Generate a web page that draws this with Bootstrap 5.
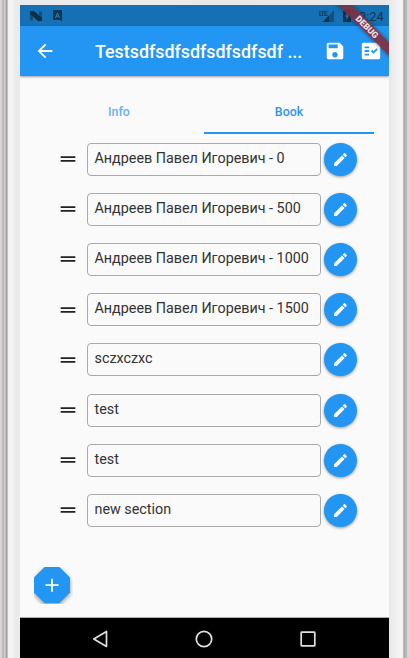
<!DOCTYPE html>
<html lang="en">
<head>
<meta charset="utf-8">
<meta name="viewport" content="width=device-width, initial-scale=1">
<title>Book</title>
<link href="https://cdn.jsdelivr.net/npm/bootstrap@5.3.0/dist/css/bootstrap.min.css" rel="stylesheet">
<style>
html, body { height: 100%; }
body { font-family: Roboto, "Liberation Sans", sans-serif; overflow: hidden; color: #2b2b2b; }
.phone { width: 410px; height: 658px; padding: 5px 21px 0 20px;
  background: linear-gradient(90deg, #dedadb 0, #d3cecf 2px, #a9a4a5 3px, #d0cbcc 4px, #cdc8c9 5px, #b9b4b5 6px, #8f8a8c 7px, #f0f0f1 8px, #f5f5f6 10px, #f3f3f4 13px, #ebebed 15px, #ebebed 20px, #e8e8ea 390px, #f0f0f1 395px, #f5f5f6 401px, #f0f0f1 403px, #8f8a8c 404px, #cfcacb 405px, #a7a2a3 406px, #d6d1d2 407px, #dedadb 410px); }
.screen { width: 369px; height: 653px; background: #fafafa; }
.status-bar { height: 21px; background: #1570b5; color: #113650; padding: 0 7px 0 9px; }
.clock { font-size: 12.9px; line-height: 21px; width: 27px; padding-top: 1px; text-align: right; }
.app-bar { height: 50px; background: #2396f3; padding: 0 7px 0 14px; box-shadow: 0 1px 2px rgba(60,60,100,.5); z-index: 1; }
.app-title { font-size: 17.85px; font-weight: 500; line-height: 24px; margin-left: 39px; width: 215px; padding-top: 1px; }
.ribbon-box { width: 60px; height: 60px; z-index: 2; }
.ribbon { left: -7px; top: 17px; width: 90px; height: 10px; background: rgba(126,47,67,.9); transform: rotate(45deg);
  box-shadow: 0 0 4px rgba(0,0,0,.5); font-size: 8.8px; line-height: 10px; font-weight: 900; color: #e9dfe3; }
.tab-strip { height: 43px; margin: 15px 15px 0 14px; }
.tab-strip .nav-link { font-size: 12.4px; font-weight: 500; line-height: 42px; height: 43px; padding: 0; color: #65b3f6; border-bottom: 2px solid transparent; border-radius: 0; }
.tab-strip .nav-link.active { color: #2b97ee; border-bottom-color: #2396f3; }
.entries { padding: 0 32px 0 37px; }
.entry { height: 50.2px; }
.entry .form-control { width: 234px; height: 33px; margin: 0 3px 0 8px; padding: 0 6.5px 2px; font-size: 14.34px; line-height: 29px; color: #333; background: transparent; border: 1px solid #aaa; border-radius: 4px; }
.edit-btn { width: 33px; height: 33px; background: #2396f3; box-shadow: 0 1px 3px rgba(0,0,0,.4); }
.add-wrap { margin: 0 0 13px 14px; width: 39px; height: 37px; overflow: hidden; }
.add-shadow { filter: drop-shadow(0 2px 2px rgba(0,0,0,.4)); }
.nav-keys { height: 41px; background: #000; border-top: 1px solid #aaa; padding: 1px 73px 0 72px; }
.a-badge { margin-left: 10px; margin-right: auto; }
.check-icon { margin-left: 14px; }
svg { display: block; flex: none; }
</style>
</head>
<body>
<div class="phone">
<div class="screen position-relative d-flex flex-column overflow-hidden">
  <div class="status-bar d-flex align-items-center">
    <svg width="14" height="12" viewBox="0 0 14 12"><path d="M1 1.5h3v9H1zM10 1.5h3v9h-3z" fill="#174f7b"/><path d="M1 1h4l8 7v3H9L1 4z" fill="#102f42"/></svg>
    <svg class="a-badge" width="10" height="11" viewBox="0 0 10 11"><path fill="#113650" d="M0 0h9v11H8l-1-1H0z"/><path d="M2.5 8l2-5 2 5M3.2 6.3h2.6" fill="none" stroke="#337eb1"/></svg>
    <svg width="16" height="14" viewBox="0 0 16 14"><path d="M15 1v12H4z" fill="#154f7c"/><path d="M10 6.5V13H4z" fill="#10344c"/><text x="0" y="6.5" font-size="7" font-weight="500" fill="#113650" textLength="9">LTE</text></svg>
    <svg class="ms-2" width="8" height="13" viewBox="0 0 8 13"><path d="M0 1.5h2V0h4v1.5h2V13H0z" fill="#10334b"/><path d="M4.5 3.5L2 7.5h1.6V11L6 6.5H4.5z" fill="#3684b8"/></svg>
    <div class="clock ms-1 ps-1">8:24</div>
  </div>
  <div class="app-bar d-flex align-items-center text-white position-relative">
    <svg width="22" height="22" viewBox="0 0 24 24" fill="#fff"><path d="M20 11H7.83l5.59-5.59L12 4l-8 8 8 8 1.41-1.41L7.83 13H20v-2z"/></svg>
    <div class="app-title text-nowrap">Testsdfsdfsdfsdfsdfsdf ...</div>
    <svg class="ms-auto" width="22" height="22" viewBox="0 0 24 24" fill="#fff"><path d="M17 3H5c-1.11 0-2 .9-2 2v14c0 1.1.89 2 2 2h14c1.1 0 2-.9 2-2V7l-4-4zm-5 16c-1.66 0-3-1.34-3-3s1.34-3 3-3 3 1.34 3 3-1.34 3-3 3zm3-10H5V5h10v4z"/></svg>
    <svg class="check-icon" width="22" height="22" viewBox="0 0 24 24" fill="#fff"><path fill-rule="evenodd" d="M20 3H4c-1.1 0-2 .9-2 2v14c0 1.1.9 2 2 2h16c1.1 0 2-.9 2-2V5c0-1.1-.9-2-2-2zM10 17H5v-2h5v2zm0-4H5v-2h5v2zm0-4H5V7h5v2zm4.82 6L12 12.16l1.41-1.41 1.41 1.42L17.99 9l1.42 1.42L14.82 15z"/></svg>
  </div>
  <div class="ribbon-box position-absolute top-0 end-0 overflow-hidden">
    <div class="ribbon position-absolute text-center">DEBUG</div>
  </div>
  <div class="tab-strip nav nav-justified">
    <a class="nav-link flex-fill w-50" href="#">Info</a>
    <a class="nav-link flex-fill w-50 active" href="#">Book</a>
  </div>
  <div class="entries" id="entries"></div>
  <div class="add-wrap mt-auto"><div class="add-shadow">
    <svg width="36" height="36" viewBox="0 0 36 36"><path fill="#2396f3" d="M10.5 0h15L36 10.5v15L25.5 36h-15L0 25.5v-15z"/><path d="M18 11.7v13M11.5 18.2h13" stroke="#fff" stroke-width="1.8"/></svg>
  </div></div>
  <div class="nav-keys d-flex align-items-center justify-content-between">
    <svg width="16" height="18" viewBox="0 0 16 18" fill="none" stroke="#e2dfdf" stroke-width="1.7"><path d="M14.5 1.5v15L1.8 9z" stroke-linejoin="round"/></svg>
    <svg width="18" height="18" viewBox="0 0 18 18" fill="none" stroke="#e2dfdf" stroke-width="1.7"><circle cx="9" cy="9" r="7.7"/></svg>
    <svg width="16" height="16" viewBox="0 0 16 16" fill="none" stroke="#e2dfdf" stroke-width="1.7"><rect x="1.2" y="1.2" width="13.6" height="13.6" rx=".5"/></svg>
  </div>
</div>
</div>
<script src="https://cdn.jsdelivr.net/npm/bootstrap@5.3.0/dist/js/bootstrap.bundle.min.js"></script>
<script>
const sections = ["Андреев Павел Игоревич - 0", "Андреев Павел Игоревич - 500", "Андреев Павел Игоревич - 1000", "Андреев Павел Игоревич - 1500", "sczxczxc", "test", "test", "new section"];
document.getElementById("entries").innerHTML = sections.map(s => `
  <div class="entry d-flex align-items-center">
    <svg width="22" height="22" viewBox="0 0 24 24" fill="#222"><path d="M20 9H4v2h16V9zM4 15h16v-2H4v2z"/></svg>
    <div class="form-control text-nowrap flex-shrink-0">${s}</div>
    <button class="edit-btn btn rounded-circle border-0 p-0 d-flex align-items-center justify-content-center flex-shrink-0" aria-label="Edit">
      <svg width="17" height="17" viewBox="0 0 24 24" fill="#fff"><path d="M3 17.25V21h3.75L17.81 9.94l-3.75-3.75L3 17.25zM20.71 7.04c.39-.39.39-1.02 0-1.41l-2.34-2.34c-.39-.39-1.02-.39-1.41 0l-1.83 1.83 3.75 3.75 1.83-1.83z"/></svg>
    </button>
  </div>`).join("");
</script>
</body>
</html>
